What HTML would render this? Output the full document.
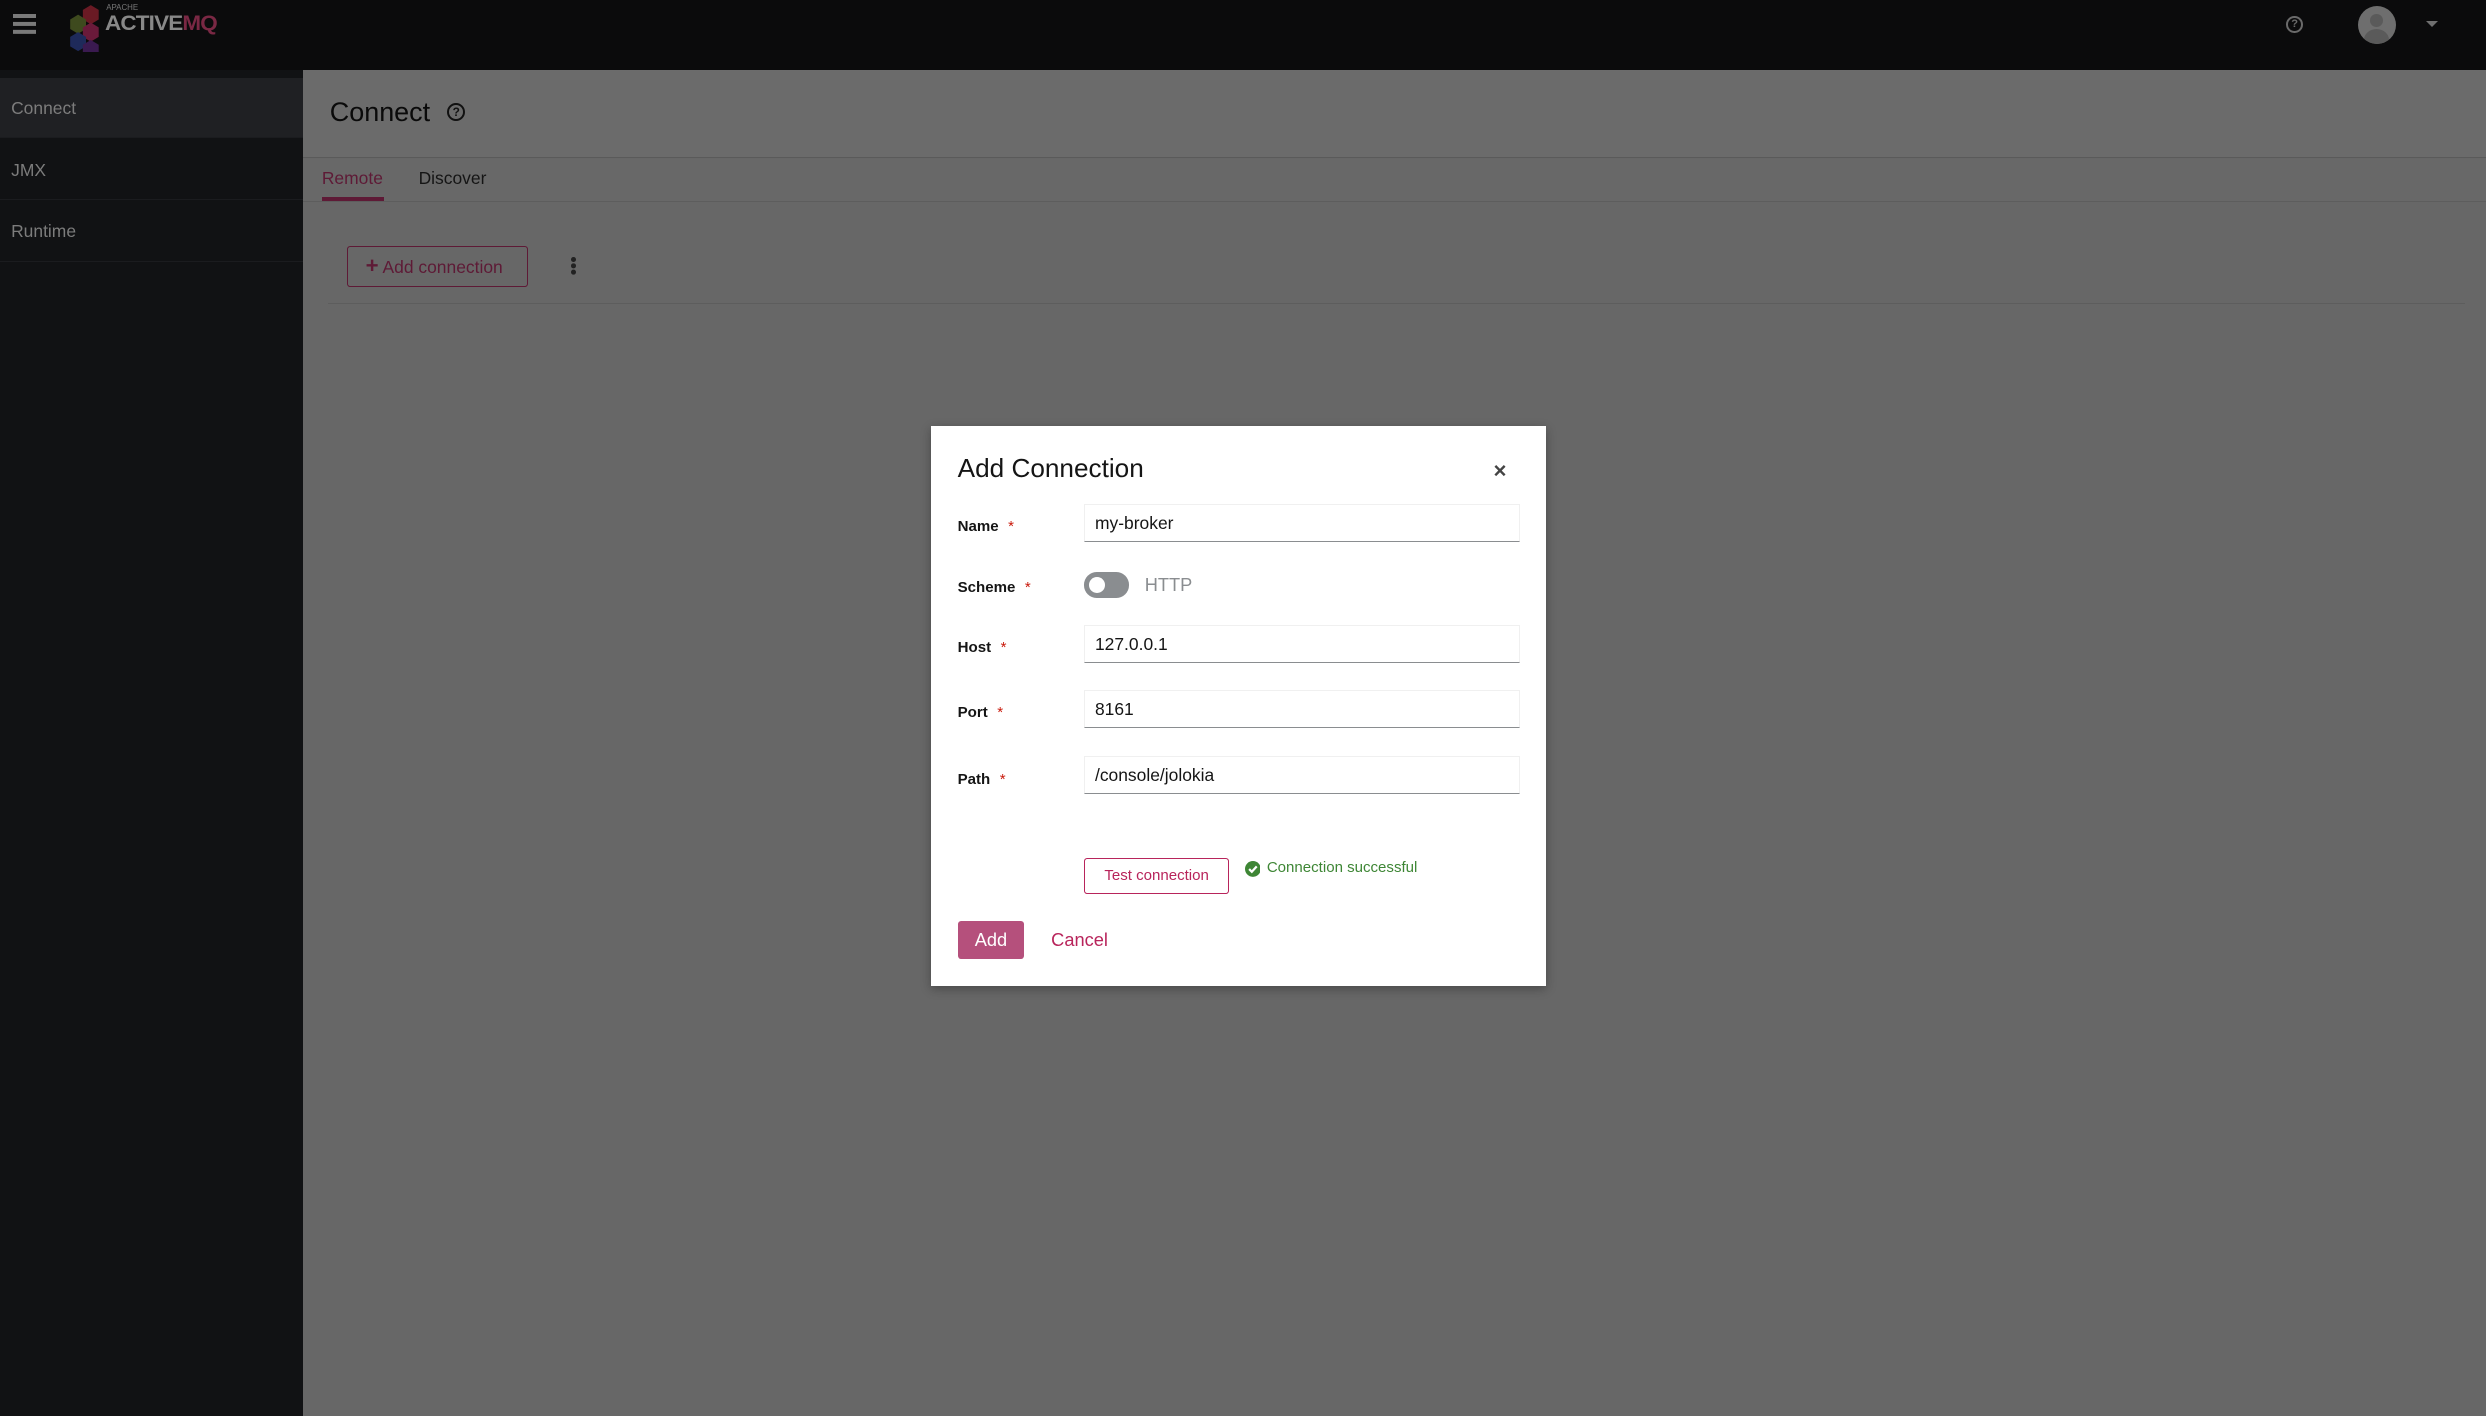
<!DOCTYPE html>
<html><head><meta charset="utf-8">
<style>
html,body{margin:0;padding:0;}
body{width:2486px;height:1416px;overflow:hidden;background:#666;font-family:"Liberation Sans",sans-serif;}
#z{zoom:1.5855;width:1568px;height:893px;position:relative;overflow:hidden;background:#676767;}
.a{position:absolute;}
.top{left:0;top:0;width:1568px;height:44px;background:#0b0b0c;}
.side{left:0;top:44px;width:191px;height:849px;background:#111214;}
.nav{position:absolute;left:0;width:191px;height:38px;border-bottom:1px solid #1b1c1f;color:#7c7c7c;font-size:11px;line-height:38px;padding-left:7px;box-sizing:border-box;}
.hdr{left:191px;top:44px;width:1377px;height:55px;background:#6b6b6b;border-bottom:1px solid #5a5a5a;}
.tabs{left:191px;top:100px;width:1377px;height:27px;border-bottom:1px solid #5d5d5d;background:#686868;}
.lab{position:absolute;left:604px;font-size:9.5px;font-weight:bold;color:#151515;}
.lab span{color:#c9190b;margin-left:6px;font-weight:normal;}
.inp{position:absolute;left:684px;width:275px;height:24px;box-sizing:border-box;border:1px solid #f0f0f0;border-bottom:1px solid #8a8d90;font-size:11px;color:#151515;padding-left:6px;line-height:23px;}
</style></head><body><div id="z">
<div class="a top"></div>
<div class="a" style="left:8px;top:9px;width:15px;height:2.5px;background:#7a7a7a;box-shadow:0 5px 0 #7a7a7a,0 10px 0 #7a7a7a"></div>
<svg class="a" style="left:42px;top:1px" width="30" height="32" viewBox="0 0 30 32">
<polygon points="15,2 20,5 20,11 15,14 10,11 10,5" fill="#6a1a24"/>
<polygon points="7,8 12,11 12,17 7,20 2,17 2,11" fill="#3e4a1e"/>
<polygon points="15,13 20,16 20,22 15,25 10,22 10,16" fill="#6a1a3a"/>
<polygon points="7,19 12,22 12,28 7,31 2,28 2,22" fill="#1e2a5a"/>
<polygon points="15,24 20,27 20,32 15,32 10,32 10,27" fill="#3a1a50"/>
</svg>
<div class="a" style="left:67px;top:2px;font-size:5px;color:#777">APACHE</div>
<div class="a" style="left:66px;top:7px;font-size:13.5px;font-weight:bold;color:#888;letter-spacing:-0.5px;transform:scaleX(1.05);transform-origin:left">ACTIVE<span style="color:#7a2844">MQ</span></div>
<div class="a" style="left:1442px;top:10px;width:8px;height:8px;border:1.3px solid #6a6a6a;border-radius:50%;font-size:7px;line-height:8px;text-align:center;color:#6a6a6a;font-weight:bold">?</div>
<div class="a" style="left:1487px;top:4px;width:24px;height:24px;border-radius:50%;background:#6e6e6e;overflow:hidden">
<div class="a" style="left:8px;top:5px;width:8px;height:8px;border-radius:50%;background:#5a5a5a"></div>
<div class="a" style="left:4px;top:14px;width:16px;height:14px;border-radius:50% 50% 0 0;background:#5a5a5a"></div></div>
<div class="a" style="left:1530px;top:13px;width:0;height:0;border-left:4px solid transparent;border-right:4px solid transparent;border-top:4px solid #707070"></div>

<div class="a side"></div>
<div class="nav" style="top:49px;background:#1f2023">Connect</div>
<div class="nav" style="top:88px">JMX</div>
<div class="nav" style="top:127px">Runtime</div>

<div class="a hdr"></div>
<div class="a" style="left:208px;top:61px;font-size:17px;color:#0a0a0a">Connect</div>
<div class="a" style="left:282px;top:65px;width:9px;height:9px;border:1.3px solid #111;border-radius:50%;font-size:7.5px;line-height:9px;text-align:center;color:#111;font-weight:bold">?</div>
<div class="a tabs"></div>
<div class="a" style="left:203px;top:106px;font-size:11px;color:#5e1a36">Remote</div>
<div class="a" style="left:203px;top:124px;width:39px;height:3px;background:#5e1a36"></div>
<div class="a" style="left:264px;top:106px;font-size:11px;color:#151515">Discover</div>
<div class="a" style="left:219px;top:155px;width:114px;height:26px;box-sizing:border-box;border:1px solid #5e1a36;border-radius:2px;color:#5e1a36;font-size:11px;line-height:24px;padding-left:11px"><b style="font-size:14px">+</b> Add connection</div>
<div class="a" style="left:360px;top:162px;width:3px;height:3px;border-radius:50%;background:#222;box-shadow:0 4px 0 #222,0 8px 0 #222"></div>
<div class="a" style="left:207px;top:191px;width:1348px;height:1px;background:#5d5d5d"></div>

<div class="a" style="left:587px;top:269px;width:388px;height:353px;background:#fff;box-shadow:0 2px 6px rgba(0,0,0,.3)"></div>
<div class="a" style="left:604px;top:286px;font-size:16.5px;color:#151515">Add Connection</div>
<div class="a" style="left:942px;top:289px;font-size:14px;font-weight:bold;color:#444">×</div>
<div class="lab" style="top:327px">Name<span>*</span></div>
<div class="lab" style="top:365px">Scheme<span>*</span></div>
<div class="lab" style="top:403px">Host<span>*</span></div>
<div class="lab" style="top:444px">Port<span>*</span></div>
<div class="lab" style="top:486px">Path<span>*</span></div>
<div class="inp" style="top:318px">my-broker</div>
<div class="a" style="left:684px;top:361px;width:28px;height:16px;border-radius:8px;background:#8a8d90"></div>
<div class="a" style="left:687px;top:364px;width:10px;height:10px;border-radius:50%;background:#fff"></div>
<div class="a" style="left:722px;top:362px;font-size:11.5px;color:#8a8d90">HTTP</div>
<div class="inp" style="top:394px">127.0.0.1</div>
<div class="inp" style="top:435px">8161</div>
<div class="inp" style="top:477px">/console/jolokia</div>
<div class="a" style="left:684px;top:541px;width:91px;height:23px;box-sizing:border-box;border:1px solid #b8245b;border-radius:2px;color:#b8245b;font-size:9.5px;line-height:21px;text-align:center">Test connection</div>
<svg class="a" style="left:785px;top:543px" width="10" height="10" viewBox="0 0 10 10"><circle cx="5" cy="5" r="5" fill="#3e8635"/><path d="M2.6 5.1 L4.3 6.8 L7.4 3.4" stroke="#fff" stroke-width="1.4" fill="none"/></svg>
<div class="a" style="left:799px;top:542px;font-size:9.5px;color:#3e8635">Connection successful</div>
<div class="a" style="left:604px;top:581px;width:42px;height:24px;background:#b5507c;border-radius:2px;color:#fff;font-size:11.5px;line-height:24px;text-align:center">Add</div>
<div class="a" style="left:663px;top:586px;font-size:11.5px;color:#b8245b">Cancel</div>
</div></body></html>
